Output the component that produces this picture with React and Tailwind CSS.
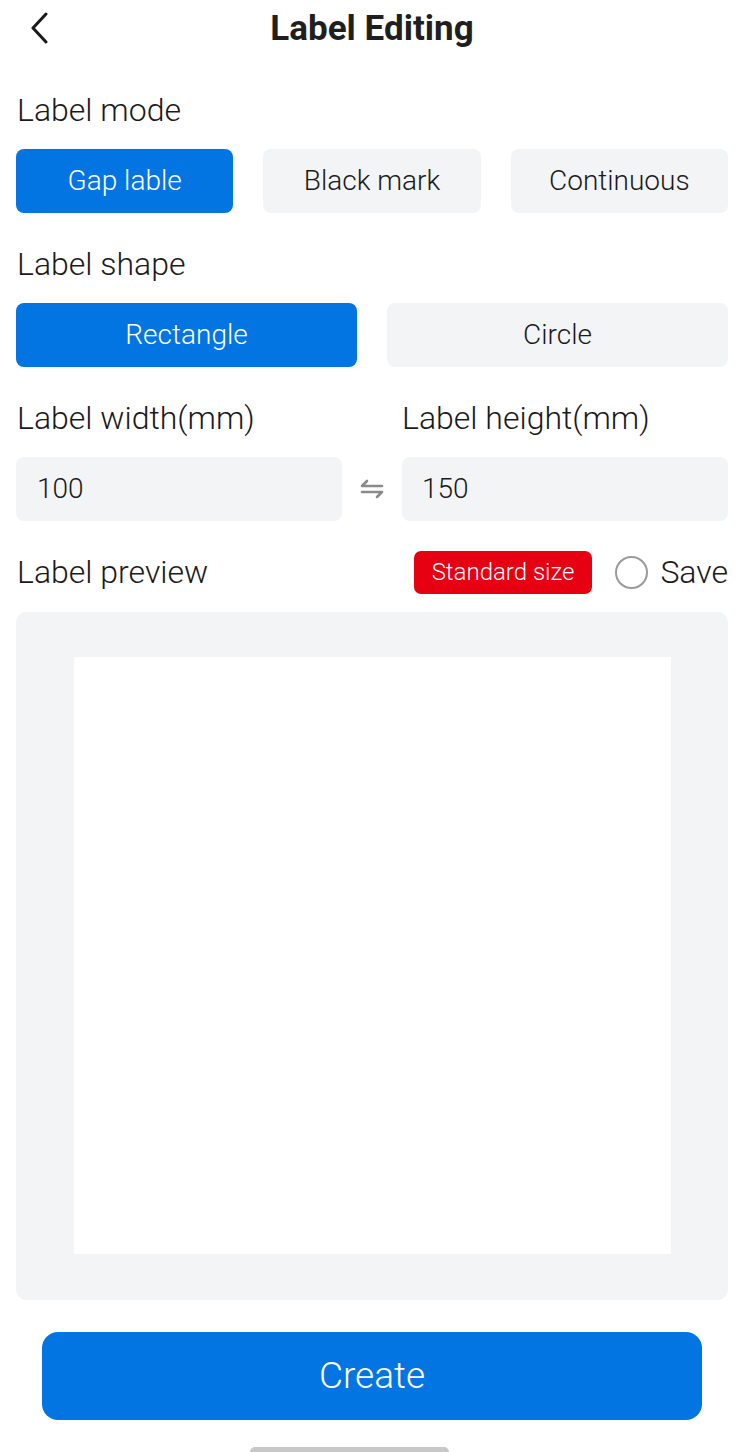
import React from "react";

export default function App() {
  const font = { fontFamily: "Roboto, 'Noto Sans', sans-serif" };
  return (
    <div className="w-[744px] h-[1452px] bg-white relative overflow-hidden text-[#1a1a1a]" style={font}>
      {/* Header */}
      <div className="relative h-[56px] flex items-center justify-center">
        <svg className="absolute left-[28px] top-[12px]" width="22" height="32" viewBox="0 0 22 32" fill="none">
          <path d="M18 2 L5 16 L18 30" stroke="#1a1a1a" strokeWidth="3" strokeLinecap="round" strokeLinejoin="round" />
        </svg>
        <div className="text-[35px] font-bold text-[#1f1f1f] leading-none">Label Editing</div>
      </div>

      <div className="px-[16px]">
        {/* Label mode */}
        <div className="mt-[37px] text-[32px] font-light leading-[34px] pl-[1px]">Label mode</div>
        <div className="mt-[22px] grid grid-cols-3 gap-[30px] font-light">
          <div className="h-[64px] rounded-[8px] bg-[#0275e3] text-white flex items-center justify-center text-[28px]">Gap lable</div>
          <div className="h-[64px] rounded-[8px] bg-[#f3f4f6] flex items-center justify-center text-[28px]">Black mark</div>
          <div className="h-[64px] rounded-[8px] bg-[#f3f4f6] flex items-center justify-center text-[28px]">Continuous</div>
        </div>

        {/* Label shape */}
        <div className="mt-[34px] text-[32px] font-light leading-[34px] pl-[1px]">Label shape</div>
        <div className="mt-[22px] grid grid-cols-2 gap-[30px] font-light">
          <div className="h-[64px] rounded-[8px] bg-[#0275e3] text-white flex items-center justify-center text-[28px]">Rectangle</div>
          <div className="h-[64px] rounded-[8px] bg-[#f3f4f6] flex items-center justify-center text-[28px]">Circle</div>
        </div>

        {/* Width / height */}
        <div className="mt-[34px] flex font-light">
          <div className="w-[326px] text-[32px] leading-[34px] pl-[1px]">Label width(mm)</div>
          <div className="ml-[60px] text-[32px] leading-[34px]">Label height(mm)</div>
        </div>
        <div className="mt-[22px] flex items-center font-light">
          <div className="w-[326px] h-[64px] rounded-[8px] bg-[#f3f4f6] flex items-center pl-[21px] text-[28px]">100</div>
          <div className="w-[60px] flex items-center justify-center">
            <svg width="26" height="22" viewBox="0 0 26 22" fill="none">
              <path d="M23 8 H3 L8 3" stroke="#8a8a8a" strokeWidth="2.6" strokeLinecap="round" strokeLinejoin="round" />
              <path d="M3 14 H23 L18 19" stroke="#8a8a8a" strokeWidth="2.6" strokeLinecap="round" strokeLinejoin="round" />
            </svg>
          </div>
          <div className="flex-1 h-[64px] rounded-[8px] bg-[#f3f4f6] flex items-center pl-[20px] text-[28px]">150</div>
        </div>

        {/* Preview header */}
        <div className="mt-[29px] flex items-center h-[44px] font-light">
          <div className="text-[32px] leading-[34px] pl-[1px] flex-1">Label preview</div>
          <div className="h-[43px] px-[18px] rounded-[7px] bg-[#e60012] text-white text-[24px] flex items-center">Standard size</div>
          <div className="ml-[23px] w-[33px] h-[33px] rounded-full border-[2px] border-[#9a9a9a]"></div>
          <div className="ml-[12px] text-[32px] leading-[34px]">Save</div>
        </div>

        {/* Preview box */}
        <div className="mt-[18px] h-[688px] rounded-[10px] bg-[#f3f4f6] pt-[45px] flex justify-center">
          <div className="w-[597px] h-[597px] bg-white"></div>
        </div>

        {/* Create */}
        <div className="mt-[32px] px-[26px]">
          <div className="h-[88px] rounded-[16px] bg-[#0275e3] text-white flex items-center justify-center text-[37px] font-light">Create</div>
        </div>
      </div>

      <div className="absolute left-[250px] top-[1447px] w-[199px] h-[10px] rounded-full bg-[#c8c8c8]"></div>
    </div>
  );
}
